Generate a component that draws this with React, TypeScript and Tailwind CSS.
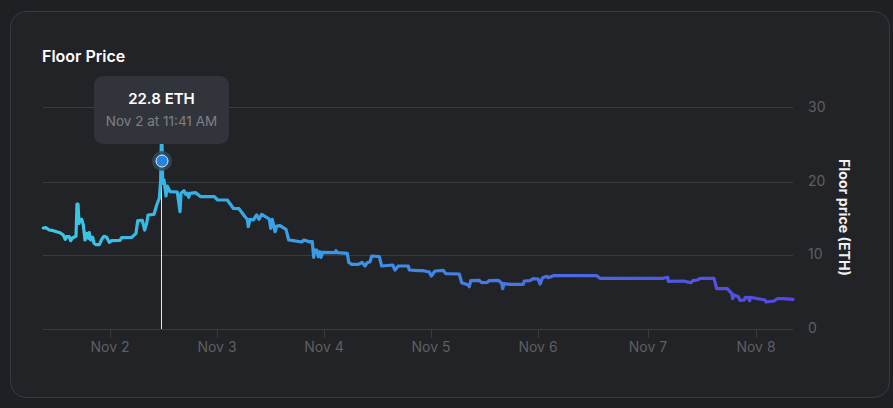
const seg2 = [[40,204],[47,203],[58,210],[70,212],[90,218],[100,225],[106,238],[110,230],[118,230],[122,242],[128,233],[138,229],[141,132],[144,132],[147,190],[150,178],[155,178],[160,195],[165,240],[170,220],[175,235],[178,218],[182,240],[188,232],[192,250],[198,254],[208,254],[215,238],[222,229],[230,232],[238,247],[245,242],[270,241],[275,233],[305,232],[318,220],[323,182],[337,181],[344,210],[350,190],[354,165],[372,163],[380,135],[388,115],[392,60],[394,-50],[396,-50],[398,70],[402,60],[408,108],[412,78],[420,95],[442,96],[450,155],[453,100],[462,92],[467,103],[472,100],[476,112],[480,100],[497,98],[512,110],[553,110],[563,120],[592,120],[610,145],[627,146],[645,170],[652,178],[655,200],[660,178],[670,180],[680,165],[687,178],[695,163],[718,177],[722,205],[727,178],[735,215],[740,198],[750,197],[768,208],[776,240],[785,241],[815,246],[822,240],[840,246]];
const seg3 = [[60,125],[67,125],[71,172],[74,150],[80,150],[85,170],[90,155],[93,172],[98,157],[135,158],[138,152],[142,158],[172,160],[176,187],[185,193],[205,193],[216,187],[225,198],[232,188],[240,185],[245,168],[268,170],[275,198],[308,195],[315,210],[325,198],[355,198],[358,210],[385,212],[400,212],[418,216],[424,228],[435,213],[460,211],[467,221],[508,222],[515,248],[535,255],[538,260],[542,242],[568,241],[575,248],[592,247],[597,242],[625,241],[635,250],[638,266],[642,251],[660,253],[700,253],[703,243],[720,242],[730,236],[745,237],[750,252],[758,233],[770,229],[775,233],[790,227],[900,227]];
const seg4 = [[0,77],[20,77],[30,85],[220,85],[233,82],[235,94],[280,93],[303,98],[308,92],[322,90],[332,85],[372,85],[380,116],[412,116],[425,130],[428,146],[432,135],[445,140],[450,151],[463,150],[466,142],[475,143],[479,152],[481,142],[525,150],[528,156],[552,153],[562,146],[580,146],[609,148]];

const pts = [
  ...seg2.map(([x, y]) => [30 + x / 3, 160 + y / 3]),
  ...seg3.map(([x, y]) => [290 + x / 3, 200 + y / 3]),
  ...seg4.map(([x, y]) => [590 + x / 3, 250 + y / 3]),
];
const d = "M" + pts.map(([x, y]) => `${x.toFixed(1)} ${y.toFixed(1)}`).join("L");

const xTicks = [
  ["Nov 2", 110],
  ["Nov 3", 217],
  ["Nov 4", 324],
  ["Nov 5", 431],
  ["Nov 6", 538],
  ["Nov 7", 648],
  ["Nov 8", 756],
] as const;
const yTicks = [
  ["30", 107, 112],
  ["20", 182, 186],
  ["10", 255, 259],
  ["0", 329, 333],
] as const;

export default function App() {
  return (
    <div className="h-[408px] w-[893px] overflow-hidden bg-[#1f2024] pl-[10px] pt-[11px] font-['Inter',sans-serif]">
      <div className="flex h-[387px] w-[880px] flex-col rounded-[16px] border border-[#393a40] bg-[#222327]">
        <h2 className="mt-[34px] ml-[31px] h-[20px] text-[16px] leading-[20px] font-semibold text-white">
          Floor Price
        </h2>
        <div className="relative flex-1">
          <svg width="878" height="331" viewBox="11 66 878 331" className="block">
            <defs>
              <linearGradient id="line" gradientUnits="userSpaceOnUse" x1="43" y1="0" x2="793" y2="0">
                <stop offset="0" stopColor="#3ccbe4" />
                <stop offset="0.16" stopColor="#36b6e6" />
                <stop offset="0.4" stopColor="#3a95e8" />
                <stop offset="0.6" stopColor="#4679e6" />
                <stop offset="0.8" stopColor="#4f5ce4" />
                <stop offset="1" stopColor="#5546e6" />
              </linearGradient>
            </defs>
            {yTicks.map(([t, y, ty]) => (
              <g key={t}>
                <line x1="43" x2="793" y1={y + 0.5} y2={y + 0.5} stroke="#3a3b3f" strokeWidth="1" />
                <text x="808" y={ty} fontSize="14" fill="#5e5f63">{t}</text>
              </g>
            ))}
            {xTicks.map(([t, x]) => (
              <g key={t}>
                <line x1={x + 0.5} x2={x + 0.5} y1="329" y2="338" stroke="#3a3b3f" strokeWidth="1" />
                <text x={x} y="352" fontSize="14" fill="#5e5f63" textAnchor="middle">{t}</text>
              </g>
            ))}
            <line x1="161.5" x2="161.5" y1="161" y2="329" stroke="#e4e5e7" strokeWidth="1" />
            <path d={d} fill="none" stroke="url(#line)" strokeWidth="3.2" strokeLinejoin="round" strokeLinecap="round" />
            <circle cx="162" cy="161" r="10" fill="#2f4a5c" fillOpacity="0.85" />
            <circle cx="162" cy="161" r="6" fill="#2484e4" stroke="#e6ebf0" strokeWidth="1" />
            <text
              transform="translate(838.5 217.5) rotate(90)"
              textAnchor="middle"
              fontSize="14.2"
              fontWeight="700"
              fill="#f1f1f2"
            >
              Floor price (ETH)
            </text>
          </svg>
          <div className="absolute top-[10px] left-[83px] flex h-[68px] w-[135px] flex-col items-center justify-center rounded-[9px] bg-[#32343c]">
            <div className="text-[15px] leading-[22px] font-semibold text-white">22.8 ETH</div>
            <div className="text-[13.5px] leading-[22px] text-[#7e8087]">Nov 2 at 11:41 AM</div>
          </div>
        </div>
      </div>
    </div>
  );
}
